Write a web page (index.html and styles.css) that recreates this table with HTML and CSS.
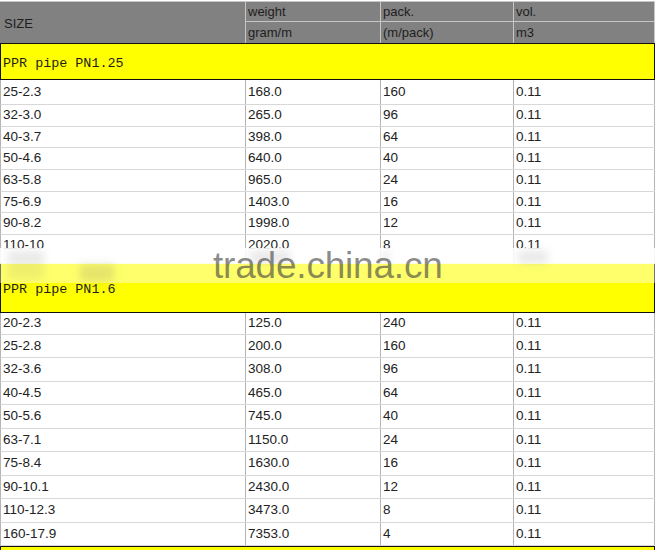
FILE: index.html
```html
<!DOCTYPE html>
<html>
<head>
<meta charset="utf-8">
<link rel="stylesheet" href="styles.css">
</head>
<body>
<div class="sheet">
  <div class="head">
    <div class="hcell size">SIZE</div>
    <div class="hcell top">weight</div>
    <div class="hcell top">pack.</div>
    <div class="hcell top">vol.</div>
    <div class="hcell">gram/m</div>
    <div class="hcell">(m/pack)</div>
    <div class="hcell">m3</div>
  </div>

  <div class="band band1">PPR pipe PN1.25</div>
  <div class="rows sec1">
    <div class="row"><div class="cell">25-2.3</div><div class="cell">168.0</div><div class="cell">160</div><div class="cell">0.11</div></div>
    <div class="row"><div class="cell">32-3.0</div><div class="cell">265.0</div><div class="cell">96</div><div class="cell">0.11</div></div>
    <div class="row"><div class="cell">40-3.7</div><div class="cell">398.0</div><div class="cell">64</div><div class="cell">0.11</div></div>
    <div class="row"><div class="cell">50-4.6</div><div class="cell">640.0</div><div class="cell">40</div><div class="cell">0.11</div></div>
    <div class="row"><div class="cell">63-5.8</div><div class="cell">965.0</div><div class="cell">24</div><div class="cell">0.11</div></div>
    <div class="row"><div class="cell">75-6.9</div><div class="cell">1403.0</div><div class="cell">16</div><div class="cell">0.11</div></div>
    <div class="row"><div class="cell">90-8.2</div><div class="cell">1998.0</div><div class="cell">12</div><div class="cell">0.11</div></div>
    <div class="row cut"><div class="cell">110-10</div><div class="cell">2020.0</div><div class="cell">8</div><div class="cell">0.11</div></div>
  </div>

  <div class="band band2">PPR pipe PN1.6</div>
  <div class="rows sec2">
    <div class="row"><div class="cell">20-2.3</div><div class="cell">125.0</div><div class="cell">240</div><div class="cell">0.11</div></div>
    <div class="row"><div class="cell">25-2.8</div><div class="cell">200.0</div><div class="cell">160</div><div class="cell">0.11</div></div>
    <div class="row"><div class="cell">32-3.6</div><div class="cell">308.0</div><div class="cell">96</div><div class="cell">0.11</div></div>
    <div class="row"><div class="cell">40-4.5</div><div class="cell">465.0</div><div class="cell">64</div><div class="cell">0.11</div></div>
    <div class="row"><div class="cell">50-5.6</div><div class="cell">745.0</div><div class="cell">40</div><div class="cell">0.11</div></div>
    <div class="row"><div class="cell">63-7.1</div><div class="cell">1150.0</div><div class="cell">24</div><div class="cell">0.11</div></div>
    <div class="row"><div class="cell">75-8.4</div><div class="cell">1630.0</div><div class="cell">16</div><div class="cell">0.11</div></div>
    <div class="row"><div class="cell">90-10.1</div><div class="cell">2430.0</div><div class="cell">12</div><div class="cell">0.11</div></div>
    <div class="row"><div class="cell">110-12.3</div><div class="cell">3473.0</div><div class="cell">8</div><div class="cell">0.11</div></div>
    <div class="row"><div class="cell">160-17.9</div><div class="cell">7353.0</div><div class="cell">4</div><div class="cell">0.11</div></div>
  </div>
  <div class="band band3"></div>

  <div class="overlay">
    <div class="smudge s1"></div>
    <div class="smudge s2"></div>
    <div class="smudge s3"></div>
    <div class="smudge s4"></div>
    <div class="smudge s5"></div>
    <div class="smudge s6"></div>
    <span class="mark">trade.china.cn</span>
  </div>
</div>
</body>
</html>
```

FILE: styles.css
```css
body {
  margin: 0;
  width: 655px;
  height: 550px;
  overflow: hidden;
  background: #fff;
  font-family: "Liberation Sans", Arial, sans-serif;
  color: #222;
}

.sheet {
  position: relative;
  width: 655px;
}

.head {
  display: grid;
  grid-template-columns: 246px 135px 133px 141px;
  grid-template-rows: 20px 21px;
  margin-top: 1px;
  border-top: 1px solid #c6c6c6;
  background: #818181;
  font-size: 13px;
  color: #1e1e1e;
}

.hcell {
  box-sizing: border-box;
  display: flex;
  align-items: center;
  padding-left: 2px;
  border-right: 1px solid #c6c6c6;
}

.hcell.top {
  border-bottom: 1px solid #c6c6c6;
}

.size {
  grid-row: span 2;
  padding-left: 4px;
  padding-top: 1px;
}

.band {
  box-sizing: border-box;
  display: flex;
  align-items: center;
  padding-left: 2px;
  background: #ffff00;
  border: 1px solid #111;
  font-family: "Liberation Mono", "DejaVu Sans Mono", monospace;
  font-size: 13.4px;
  color: #1e1e1e;
}

.band1 {
  height: 37px;
  padding-top: 3px;
}

.band2 {
  height: 50px;
  border-top: none;
  padding-top: 4px;
}

.band3 {
  height: 6px;
  border-bottom: none;
}

.row {
  box-sizing: border-box;
  display: grid;
  grid-template-columns: 245px 135px 133px 141px;
  border-left: 1px solid #b4b4b4;
  border-bottom: 1px solid #d8d8d8;
  font-size: 13.5px;
  line-height: 1;
}

.cell {
  box-sizing: border-box;
  display: flex;
  align-items: center;
  padding-left: 2px;
  padding-bottom: 1px;
  border-right: 1px solid #b4b4b4;
  overflow: hidden;
}

.sec1 .row {
  height: 21.67px;
}

.sec1 .row:first-child {
  height: 25px;
}

.sec1 .row.cut {
  height: 28px;
  border-bottom: none;
}

.sec1 .row.cut .cell {
  align-items: flex-start;
  padding-top: 3px;
  padding-bottom: 0;
}

.sec2 .row {
  height: 23.5px;
}

.sec2 .row:first-child {
  height: 22px;
}

.overlay {
  position: absolute;
  left: 0;
  top: 247px;
  width: 655px;
  height: 35px;
  background: linear-gradient(to bottom,
    rgba(255, 255, 255, 0.9) 0,
    rgba(255, 255, 255, 0.9) 16px,
    rgba(255, 255, 255, 0.42) 16px,
    rgba(255, 255, 255, 0.42) 100%);
}

.smudge {
  position: absolute;
  background: rgba(150, 150, 150, 0.22);
  filter: blur(4px);
}

.s1 { left: 8px; top: 3px; width: 36px; height: 12px; }
.s2 { left: 250px; top: 3px; width: 40px; height: 12px; }
.s3 { left: 383px; top: 3px; width: 6px; height: 12px; }
.s4 { left: 518px; top: 3px; width: 30px; height: 12px; }
.s5 { left: 8px; top: 17px; width: 36px; height: 14px; background: rgba(170, 170, 120, 0.2); }
.s6 { left: 80px; top: 16px; width: 34px; height: 18px; background: rgba(150, 150, 110, 0.25); }

.mark {
  position: absolute;
  left: 213px;
  top: -1px;
  font-family: "Liberation Sans", Arial, sans-serif;
  font-size: 37px;
  line-height: 37px;
  letter-spacing: -0.2px;
  color: rgba(60, 60, 60, 0.6);
  white-space: nowrap;
}
```
